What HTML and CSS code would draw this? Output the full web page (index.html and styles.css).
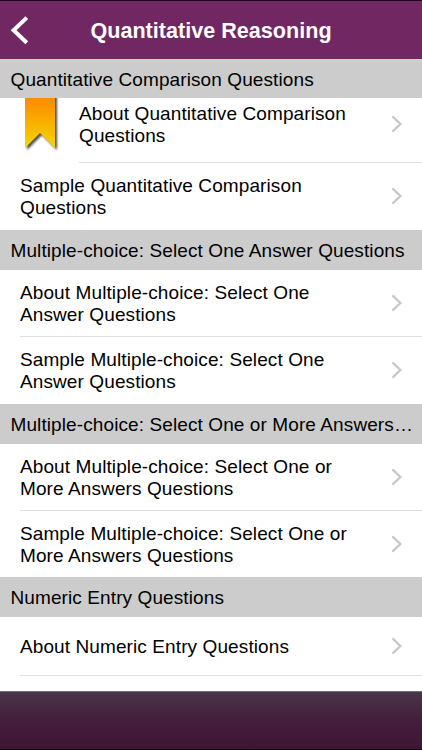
FILE: index.html
```html
<!DOCTYPE html>
<html lang="en">
<head>
    <meta charset="UTF-8">
    <meta name="viewport" content="width=device-width, initial-scale=1.0">
    <title>Quantitative Reasoning</title>
    <link rel="stylesheet" href="styles.css">
</head>
<body>
    <svg class="sprite" width="0" height="0">
        <symbol id="chevron" viewBox="0 0 12 18">
            <path d="M1.4 1.4 L9.4 9 L1.4 16.6" fill="none" stroke="#c7c7cc" stroke-width="2.3"/>
        </symbol>
    </svg>

    <header class="navbar">
        <a class="back" href="#" aria-label="Back">
            <svg width="20" height="30" viewBox="0 0 20 30">
                <path d="M16.8 2.6 L3.6 15.2 L16.8 27.8" fill="none" stroke="#fff" stroke-width="4"/>
            </svg>
        </a>
        <h1>Quantitative Reasoning</h1>
    </header>

    <main class="list">
        <section>
            <h2 class="first">Quantitative Comparison Questions</h2>
            <ul>
                <li class="row bookmarked">
                    <svg class="bookmark" width="44" height="60" viewBox="0 0 44 60">
                        <defs>
                            <linearGradient id="ribbon" x1="0" y1="0" x2="0" y2="1">
                                <stop offset="0" stop-color="#f98a00"/>
                                <stop offset="0.2" stop-color="#fb9400"/>
                                <stop offset="1" stop-color="#f3d800"/>
                            </linearGradient>
                        </defs>
                        <path d="M5 0 H35 V54 L20 39 L5 54 Z" fill="url(#ribbon)"/>
                    </svg>
                    <span class="label">About Quantitative Comparison Questions</span>
                    <svg class="chevron"><use href="#chevron"/></svg>
                </li>
                <li class="row">
                    <span class="label">Sample Quantitative Comparison Questions</span>
                    <svg class="chevron"><use href="#chevron"/></svg>
                </li>
            </ul>
        </section>

        <section>
            <h2>Multiple-choice: Select One Answer Questions</h2>
            <ul>
                <li class="row">
                    <span class="label">About Multiple-choice: Select One Answer Questions</span>
                    <svg class="chevron"><use href="#chevron"/></svg>
                </li>
                <li class="row">
                    <span class="label">Sample Multiple-choice: Select One Answer Questions</span>
                    <svg class="chevron"><use href="#chevron"/></svg>
                </li>
            </ul>
        </section>

        <section>
            <h2>Multiple-choice: Select One or More Answers…</h2>
            <ul>
                <li class="row">
                    <span class="label">About Multiple-choice: Select One or More Answers Questions</span>
                    <svg class="chevron"><use href="#chevron"/></svg>
                </li>
                <li class="row">
                    <span class="label">Sample Multiple-choice: Select One or More Answers Questions</span>
                    <svg class="chevron"><use href="#chevron"/></svg>
                </li>
            </ul>
        </section>

        <section>
            <h2>Numeric Entry Questions</h2>
            <ul>
                <li class="row single">
                    <span class="label">About Numeric Entry Questions</span>
                    <svg class="chevron"><use href="#chevron"/></svg>
                </li>
            </ul>
        </section>
    </main>

    <footer class="toolbar"></footer>
</body>
</html>
```
FILE: styles.css
```css
* {
    box-sizing: border-box;
}

body {
    font-family: "Liberation Sans", Arial, sans-serif;
    font-size: 19px;
    letter-spacing: 0.1px;
    color: #000;
    background-color: #fff;
    margin: 0;
    height: 750px;
    display: flex;
    flex-direction: column;
    overflow: hidden;
}

.sprite {
    position: absolute;
}

.navbar {
    height: 59px;
    flex: none;
    display: grid;
    grid-template-columns: 32px 1fr 32px;
    align-items: center;
    background-color: #702762;
    border-top: 1px solid #1e0719;
    color: #fff;
}

.navbar h1 {
    margin: 0;
    padding-top: 2px;
    font-size: 21.6px;
    line-height: 26px;
    letter-spacing: 0;
    text-align: center;
}

.back {
    display: flex;
    padding-left: 10px;
}

.list {
    flex: 1;
    min-height: 0;
    overflow: hidden;
}

.list h2 {
    margin: 0;
    height: 40px;
    padding: 1px 0 0 10.5px;
    font-size: 19px;
    font-weight: normal;
    line-height: 39px;
    background-color: #ccc;
    white-space: nowrap;
}

/* sticky header, the first row is scrolled a bit under it */
.list h2.first {
    position: relative;
    z-index: 1;
    height: 39px;
}

.list ul {
    list-style: none;
    margin: 0;
    padding: 0;
}

.row {
    display: flex;
    align-items: center;
    height: 67px;
    margin-left: 20px;
    padding-right: 19px;
    border-bottom: 1px solid #e0e0e2;
}

.row:last-child {
    height: 66.8px;
    border-bottom: none;
}

.row.bookmarked {
    height: 77px;
    margin-top: -12px;
    margin-left: 79px;
}

.row.single {
    height: 58.5px;
    border-bottom: 1px solid #e0e0e2;
}

.bookmark {
    flex: none;
    margin-left: -59px;
    margin-right: 15px;
    filter: drop-shadow(2.5px 2px 1px rgba(0, 0, 0, 0.7));
}

.label {
    flex: 1;
    line-height: 22px;
    padding-top: 2px;
    padding-right: 33px;
}

.chevron {
    flex: none;
    width: 12px;
    height: 18px;
}

.toolbar {
    height: 59px;
    flex: none;
    background: linear-gradient(#4b3548, #43203d 45%, #3e1534);
    border-top: 1px solid #77707a;
    border-bottom: 1px solid #10030d;
}
```
